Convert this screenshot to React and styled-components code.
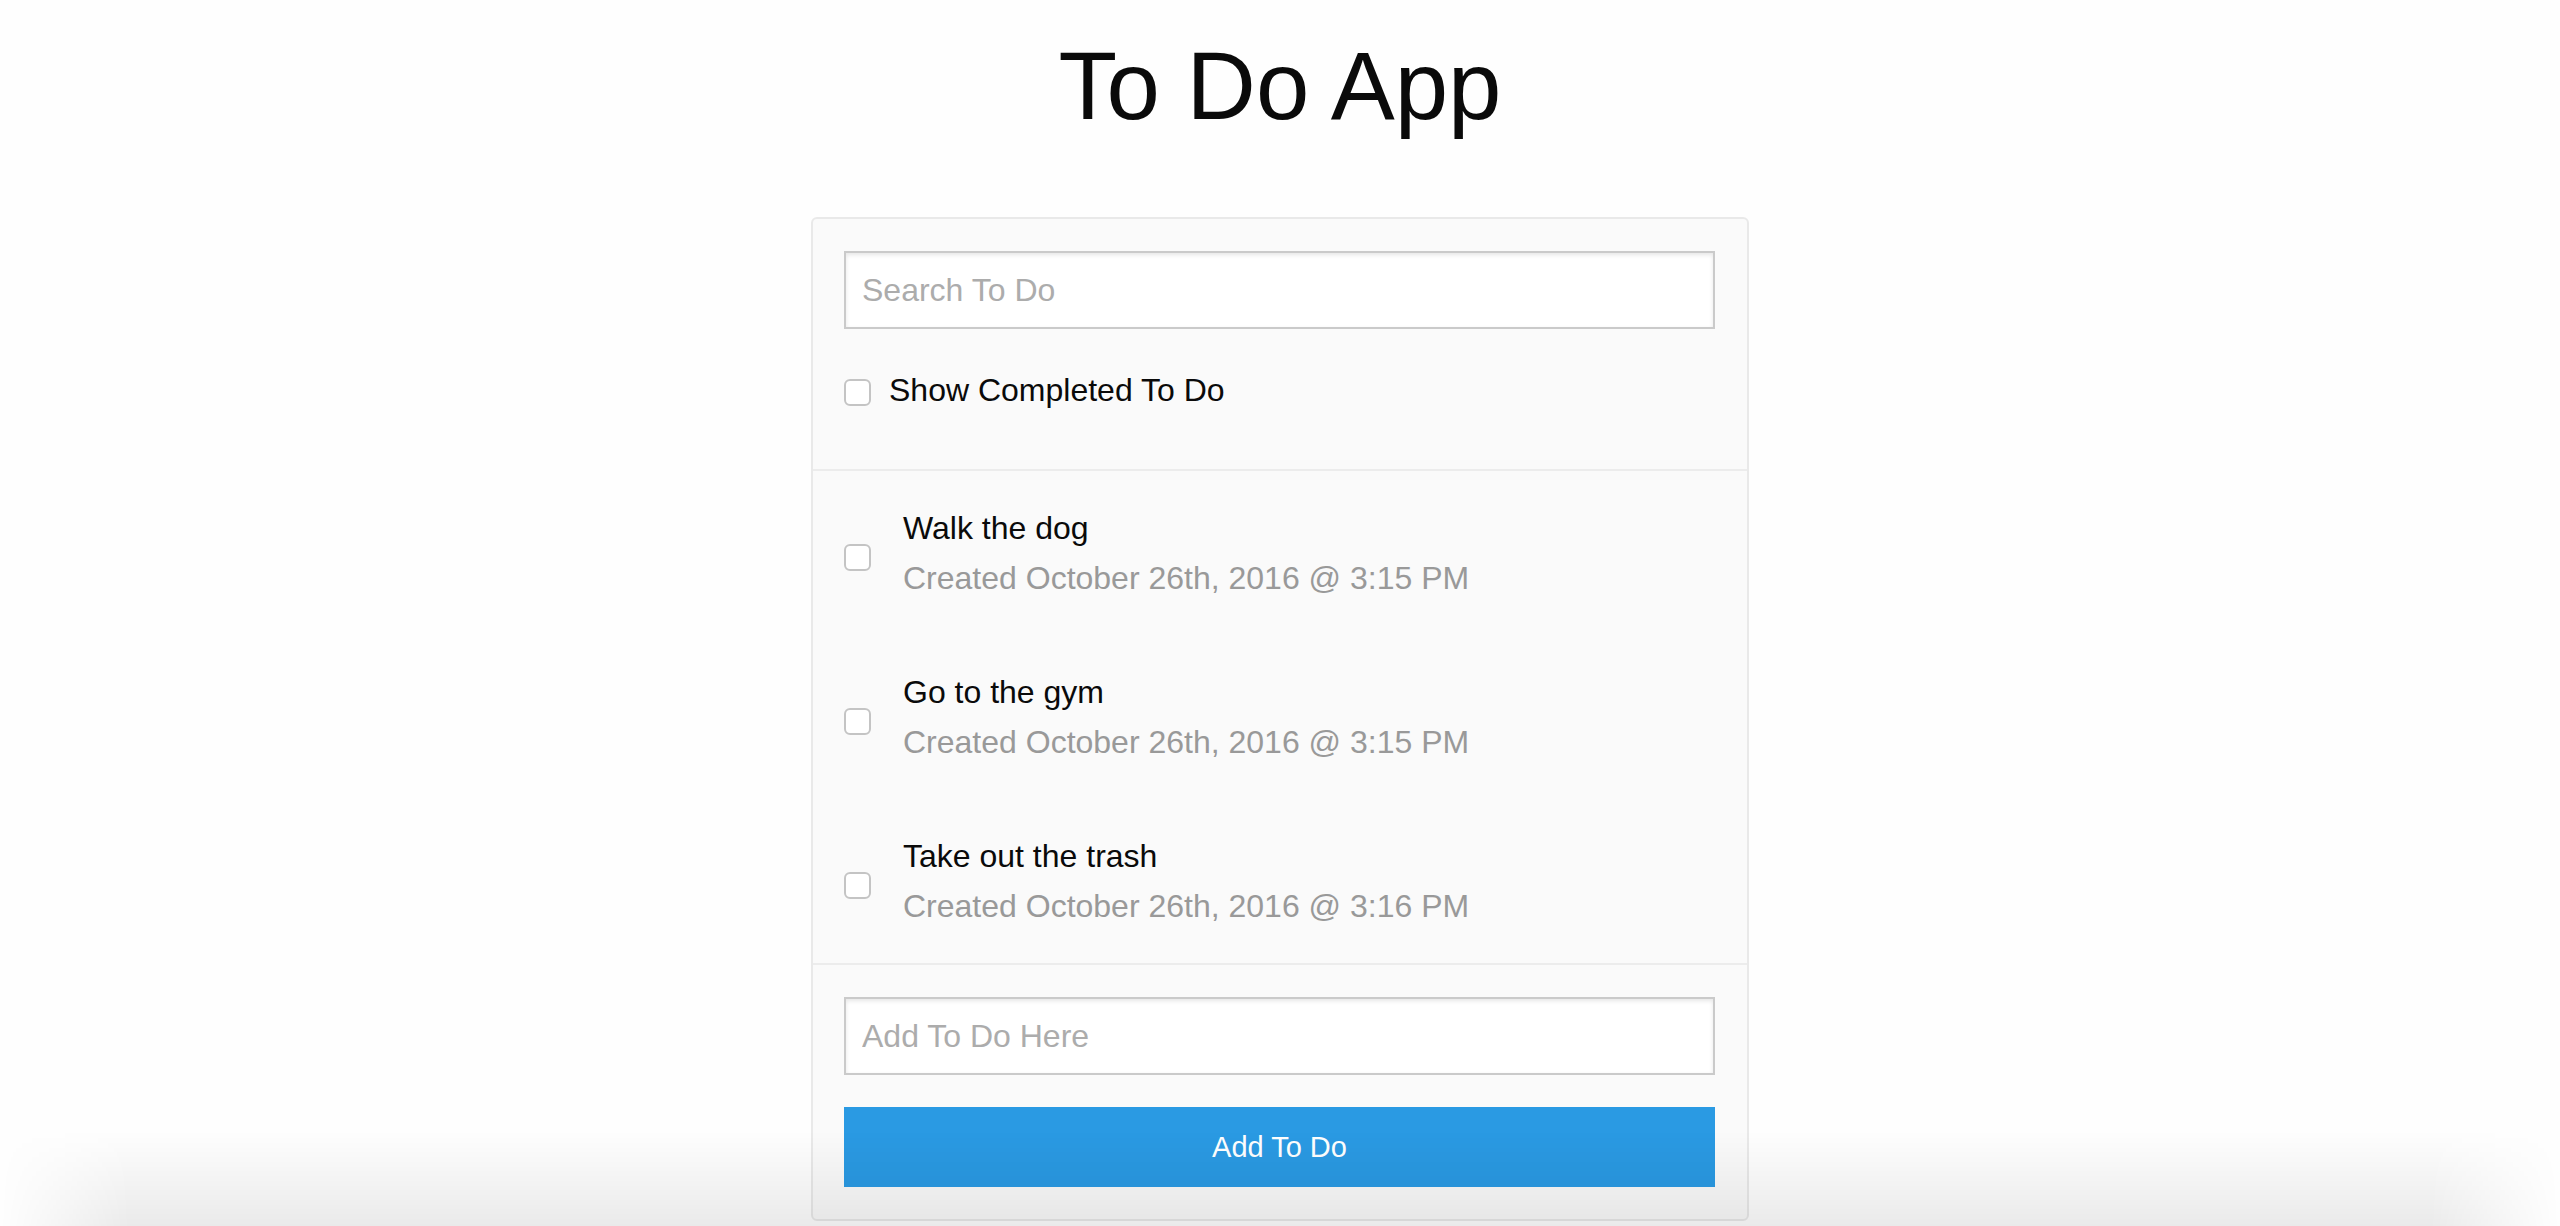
import React, { useState } from 'react'
import styled, { createGlobalStyle } from 'styled-components'

const GlobalStyle = createGlobalStyle`
  body {
    margin: 0;
    background: #fefefe;
    color: #0a0a0a;
    font-family: "Liberation Sans", Arial, sans-serif;
  }
`

const initialTodos = [
  { id: 1, text: 'Walk the dog', createdAt: 'October 26th, 2016 @ 3:15 PM', completed: false },
  { id: 2, text: 'Go to the gym', createdAt: 'October 26th, 2016 @ 3:15 PM', completed: false },
  { id: 3, text: 'Take out the trash', createdAt: 'October 26th, 2016 @ 3:16 PM', completed: false }
]

const App = () => {
  const [todos, setTodos] = useState(initialTodos)
  const [search, setSearch] = useState('')
  const [showCompleted, setShowCompleted] = useState(false)
  const [newText, setNewText] = useState('')

  const visible = todos.filter(t =>
    (showCompleted || !t.completed) &&
    t.text.toLowerCase().includes(search.toLowerCase())
  )

  const toggle = (id) => {
    setTodos(todos.map(t => t.id === id ? { ...t, completed: !t.completed } : t))
  }

  const addTodo = (e) => {
    e.preventDefault()
    if (!newText.trim()) return
    setTodos([...todos, { id: Date.now(), text: newText, createdAt: 'just now', completed: false }])
    setNewText('')
  }

  return (
    <Page>
      <GlobalStyle />
      <Title>To Do App</Title>
      <Card>
        <Header>
          <TextInput
            type="text"
            placeholder="Search To Do"
            value={search}
            onChange={e => setSearch(e.target.value)}
          />
          <CheckRow>
            <Checkbox type="checkbox" $shift={5} checked={showCompleted} onChange={() => setShowCompleted(!showCompleted)} />
            Show Completed To Do
          </CheckRow>
        </Header>
        <List>
          {visible.map(todo => (
            <Item key={todo.id} onClick={() => toggle(todo.id)}>
              <Checkbox type="checkbox" $shift={8} checked={todo.completed} readOnly />
              <ItemText>
                <p>{todo.text}</p>
                <Sub>Created {todo.createdAt}</Sub>
              </ItemText>
            </Item>
          ))}
        </List>
        <Footer onSubmit={addTodo}>
          <TextInput
            type="text"
            placeholder="Add To Do Here"
            value={newText}
            onChange={e => setNewText(e.target.value)}
          />
          <AddButton type="submit">Add To Do</AddButton>
        </Footer>
      </Card>
      <Vignette />
    </Page>
  )
}

export default App

const Page = styled.div`
  padding-top: 19px;
`

const Title = styled.h1`
  margin: 0 0 64px;
  font-size: 96px;
  line-height: 134px;
  font-weight: 400;
  text-align: center;
  color: #0a0a0a;
`

const Card = styled.div`
  width: 938px;
  margin: 0 auto;
  box-sizing: border-box;
  background: #fafafa;
  border: 2px solid #e9e9e9;
  border-radius: 6px;
`

const Header = styled.div`
  padding: 32px 32px 50px 31px;
`

const TextInput = styled.input`
  display: block;
  width: 100%;
  height: 78px;
  box-sizing: border-box;
  margin: 0 0 32px;
  padding: 0 16px;
  border: 2px solid #cacaca;
  background: #fff;
  box-shadow: inset 0 2px 4px rgba(10, 10, 10, 0.1);
  font-family: inherit;
  font-size: 32px;
  color: #0a0a0a;
  outline: none;

  &::placeholder {
    color: #acacac;
  }
`

const CheckRow = styled.label`
  display: flex;
  align-items: center;
  gap: 18px;
  font-size: 32px;
  line-height: 58px;
  cursor: pointer;
`

const Checkbox = styled.input`
  appearance: none;
  flex-shrink: 0;
  width: 27px;
  height: 27px;
  margin: ${p => p.$shift}px 0 0;
  box-sizing: border-box;
  border: 2px solid #c4c4c4;
  border-radius: 6px;
  background: #fff;
  cursor: pointer;

  &:checked {
    background: #2a9ae3;
    border-color: #2a9ae3;
  }
`

const List = styled.div`
  border-top: 2px solid #ececec;
`

const Item = styled.div`
  display: flex;
  align-items: center;
  gap: 32px;
  padding: 32px 32px 32px 31px;
  cursor: pointer;
`

const ItemText = styled.div`
  font-size: 32px;
  line-height: 50px;

  p {
    margin: 0;
  }
`

const Sub = styled.p`
  color: #999;
`

const Footer = styled.form`
  border-top: 2px solid #ececec;
  padding: 32px 32px 32px 31px;
`

const AddButton = styled.button`
  display: block;
  width: 100%;
  height: 80px;
  border: none;
  background: #2a9ae3;
  color: #fff;
  font-family: inherit;
  font-size: 29px;
  cursor: pointer;
`

const Vignette = styled.div`
  position: fixed;
  left: 0;
  right: 0;
  bottom: 0;
  height: 95px;
  pointer-events: none;
  background: linear-gradient(to bottom, rgba(0, 0, 0, 0), rgba(0, 0, 0, 0.08));
  -webkit-mask-image: linear-gradient(to right, transparent, #000 130px, #000 calc(100% - 130px), transparent);
  mask-image: linear-gradient(to right, transparent, #000 130px, #000 calc(100% - 130px), transparent);
`
